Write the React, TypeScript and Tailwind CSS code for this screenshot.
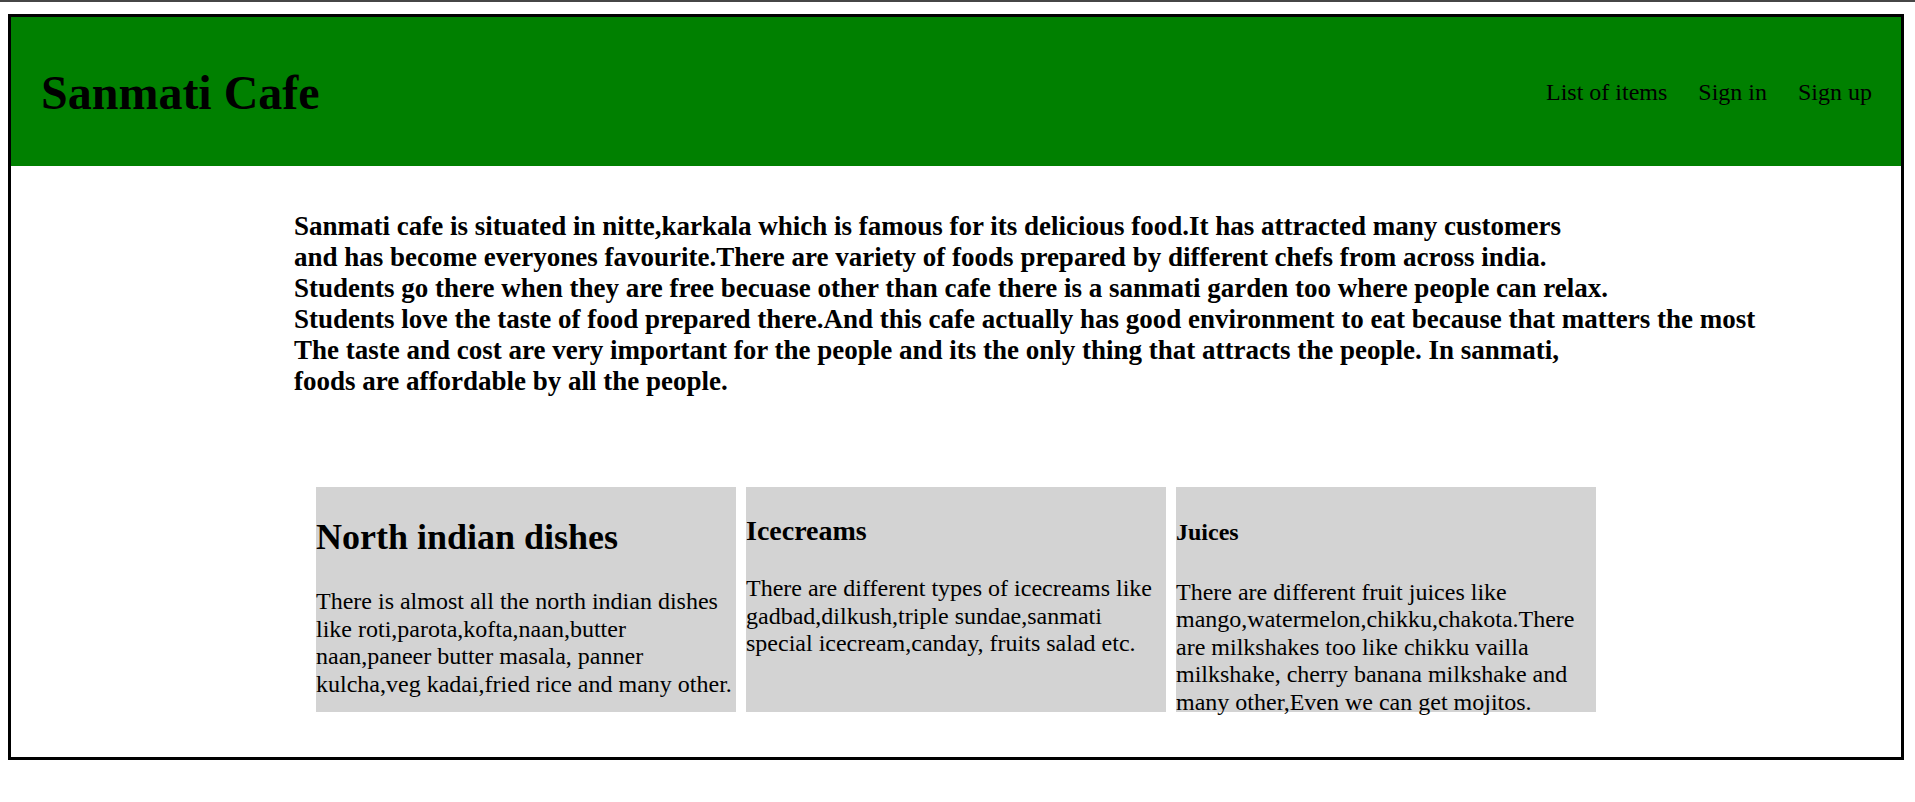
import React from 'react';

const cards = [
  {
    id: 'north',
    title: 'North indian dishes',
    titleClass: 'mt-[30px] text-[36px] leading-[41px]',
    bodyClass: 'mt-[30px]',
    body: 'There is almost all the north indian dishes like roti,parota,kofta,naan,butter naan,paneer butter masala, panner kulcha,veg kadai,fried rice and many other.',
  },
  {
    id: 'ice',
    title: 'Icecreams',
    titleClass: 'mt-[28px] text-[28px] leading-[32px]',
    bodyClass: 'mt-[28px]',
    body: 'There are different types of icecreams like gadbad,dilkush,triple sundae,sanmati special icecream,canday, fruits salad etc.',
  },
  {
    id: 'juice',
    title: 'Juices',
    titleClass: 'mt-[32px] text-[24px] leading-[27.6px]',
    bodyClass: 'mt-[32px]',
    body: 'There are different fruit juices like mango,watermelon,chikku,chakota.There are milkshakes too like chikku vailla milkshake, cherry banana milkshake and many other,Even we can get mojitos.',
  },
];

const aboutLines = [
  'Sanmati cafe is situated in nitte,karkala which is famous for its delicious food.It has attracted many customers',
  'and has become everyones favourite.There are variety of foods prepared by different chefs from across india.',
  'Students go there when they are free becuase other than cafe there is a sanmati garden too where people can relax.',
  'Students love the taste of food prepared there.And this cafe actually has good environment to eat because that matters the most',
  'The taste and cost are very important for the people and its the only thing that attracts the people. In sanmati,',
  'foods are affordable by all the people.',
];

export default function App() {
  return (
    <div className="min-h-screen bg-white font-['Liberation_Serif','Times_New_Roman',serif] text-black">
      <div className="h-[2px] bg-[#464646]" />

      <div className="ml-[8px] mr-[11px] mt-[12px] border-[3px] border-black pb-[45px]">
        <header className="h-[149px] bg-[#008000] flex items-center justify-between pl-[30px] pr-[29px]">
          <h1 className="text-[48px] font-bold leading-[55px] pt-[2px]">Sanmati Cafe</h1>
          <nav className="flex items-center gap-[31px] text-[24px] leading-[28px]">
            <a href="#">List of items</a>
            <a href="#">Sign in</a>
            <a href="#">Sign up</a>
          </nav>
        </header>

        <p className="mt-[45px] ml-[283px] text-[27px] font-bold leading-[31px] whitespace-nowrap">
          {aboutLines.map((line, i) => (
            <React.Fragment key={i}>
              {line}
              {i < aboutLines.length - 1 && <br />}
            </React.Fragment>
          ))}
        </p>

        <div className="mt-[90px] flex justify-center gap-[10px]">
          {cards.map((card) => (
            <div key={card.id} className="w-[420px] h-[225px] bg-[#d3d3d3]">
              <h2 className={`font-bold ${card.titleClass}`}>{card.title}</h2>
              <p className={`text-[24px] leading-[27.6px] ${card.bodyClass}`}>{card.body}</p>
            </div>
          ))}
        </div>
      </div>
    </div>
  );
}
